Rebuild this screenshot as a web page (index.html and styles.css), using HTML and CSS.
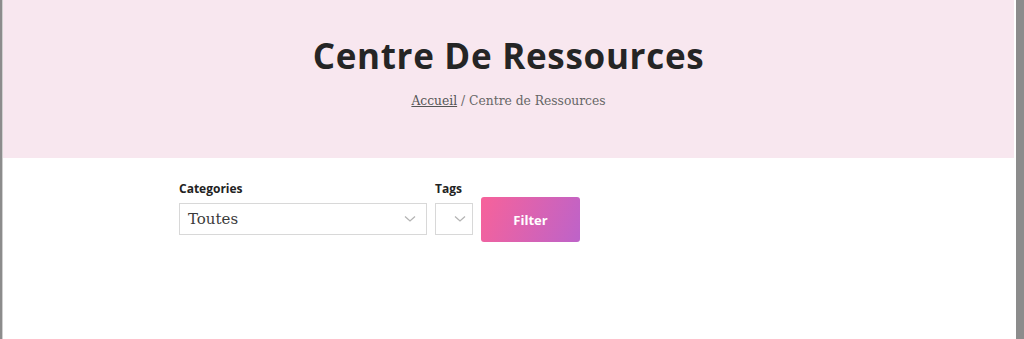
FILE: index.html
```html
<!DOCTYPE html>
<html lang="fr">
<head>
  <meta charset="UTF-8">
  <title>Centre De Ressources</title>
  <link rel="stylesheet" href="styles.css">
</head>
<body>
<div class="page">
  <div class="hero">
    <h1>Centre De Ressources</h1>
    <div class="crumbs"><a href="#">Accueil</a> / Centre de Ressources</div>
  </div>
  <form class="filters">
    <div class="field">
      <label>Categories</label>
      <div class="select wide">
        <span>Toutes</span>
        <svg width="12" height="8" viewBox="0 0 12 8"><path d="M1 1.5 L6 6 L11 1.5" fill="none" stroke="#b4b4b4" stroke-width="1.3"/></svg>
      </div>
    </div>
    <div class="field">
      <label>Tags</label>
      <div class="select narrow">
        <svg width="12" height="8" viewBox="0 0 12 8"><path d="M1 1.5 L6 6 L11 1.5" fill="none" stroke="#b4b4b4" stroke-width="1.3"/></svg>
      </div>
    </div>
    <button type="button">Filter</button>
  </form>
</div>
</body>
</html>
```

FILE: styles.css
```css
html, body {margin: 0; height: 100%;}
body {background: #8c8c8c; border-left: 2px solid #8c8c8c;}
.page {height: 100%; margin-right: 8px; background: #fff; border-left: 1px solid #d0d0d0;}
.hero {background: #f8e7ef; height: 158px; margin-right: 2px; text-align: center; overflow: hidden;}
.hero h1 {margin: 0; padding-top: 33px; font-family: "Open Sans", sans-serif; font-weight: 700; font-size: 35px; line-height: 45px; color: #252525; letter-spacing: 0.7px;}
.crumbs {margin-top: 16px; font-family: "DejaVu Serif", serif; font-size: 12.3px; color: #666;}
.crumbs a {color: #555; text-decoration: underline;}
.filters {display: flex; align-items: flex-end; padding: 23px 0 0 176px; font-family: "Open Sans", sans-serif;}
.field {display: flex; flex-direction: column; margin-right: 8px;}
.field label {font-size: 12px; font-weight: 700; color: #222; line-height: 16px; margin-bottom: 6px;}
.select {display: flex; align-items: center; justify-content: space-between; box-sizing: border-box; height: 32px; border: 1px solid #d8d8d8; background: #fff;}
.select.wide {width: 248px; padding: 0 10px 0 8px;}
.select.narrow {width: 38px; padding: 0 6px 0 0; justify-content: flex-end;}
.select span {font-family: "DejaVu Serif", serif; font-size: 15px; color: #3a3a3a;}
button {width: 99px; height: 45px; margin-bottom: -7px; border: 0; border-radius: 3px; background: linear-gradient(110deg, #f7629a, #bd63c9); color: #fff; font-family: "Open Sans", sans-serif; font-weight: 700; font-size: 13px;}
```
